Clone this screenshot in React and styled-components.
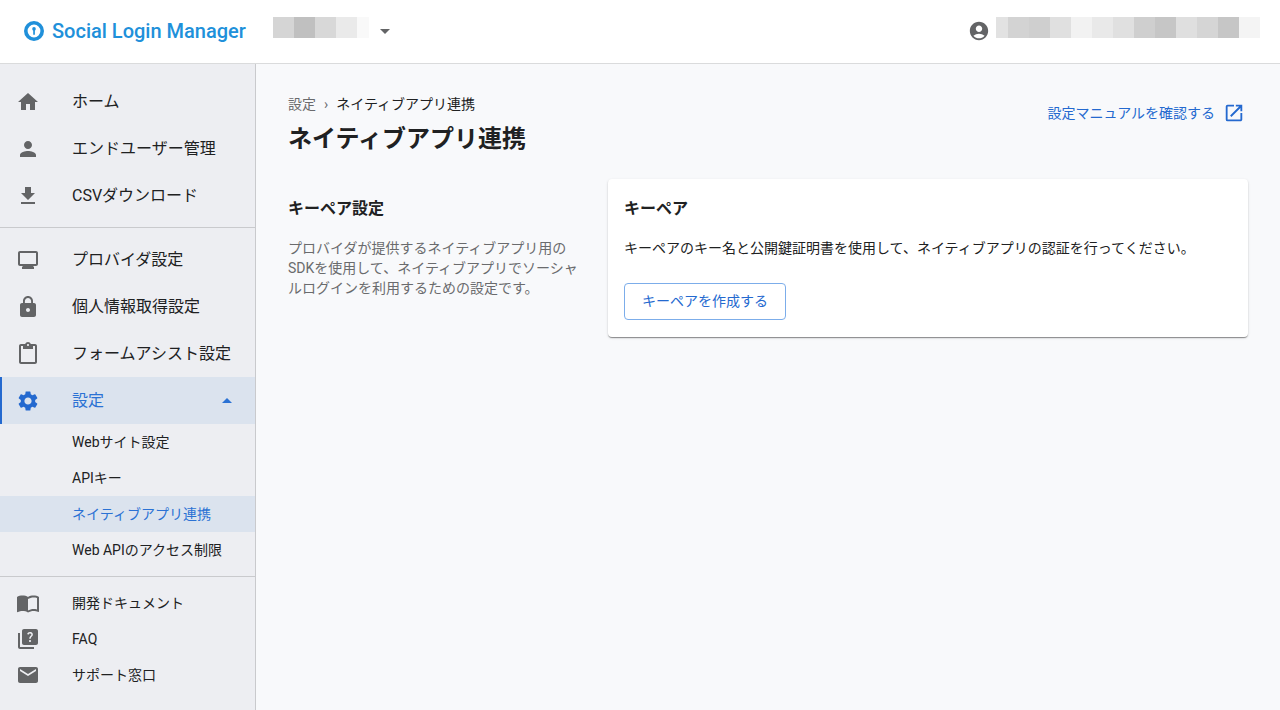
import React from "react";
import styled, { createGlobalStyle } from "styled-components";
import {
  MdAccountCircle,
  MdArrowDropDown,
  MdArrowDropUp,
  MdContentPaste,
  MdEmail,
  MdGetApp,
  MdHome,
  MdImportContacts,
  MdLock,
  MdMonitor,
  MdOpenInNew,
  MdPerson,
  MdQuiz,
  MdSettings,
} from "react-icons/md";

const GlobalStyle = createGlobalStyle`
* { box-sizing: border-box; }
body {
  margin: 0;
  font-family: Roboto, "Noto Sans CJK JP", sans-serif;
  font-size: 14px;
  line-height: 20px;
  color: #202122;
  background-color: #f8f9fb;
}
a { color: inherit; text-decoration: none; }
button { font: inherit; color: inherit; cursor: pointer; }
svg { display: block; flex-shrink: 0; }
`;

const Container = styled.div`
  display: flex;
  flex-direction: column;
  min-height: 100vh;
`;

const Header = styled.header`
  display: flex;
  align-items: center;
  height: 64px;
  padding: 0 20px 2px 24px;
  background-color: white;
  border-bottom: 1px solid #dadbdc;
`;
const Logo = styled.a`
  display: flex;
  align-items: center;
  gap: 8px;
  margin-right: 27px;
  color: #2090da;
  font-size: 20px;
  font-weight: 500;
`;
const SiteButton = styled.button`
  display: flex;
  align-items: center;
  gap: 4px;
  padding: 0;
  border: none;
  background: none;
  color: #636466;
`;
const Account = styled.div`
  display: flex;
  align-items: center;
  gap: 6px;
  margin-left: auto;
  color: #636466;
`;
const Mosaic = styled.span`
  display: flex;
  height: 28px;
`;
const Tile = styled.span`
  width: ${(props) => (props.$narrow ? "12px" : "21px")};
  height: 21px;
  background-color: ${(props) => props.$color};
`;

const Wrapper = styled.div`
  display: flex;
  flex: 1;
`;
const Sidebar = styled.nav`
  flex: 0 0 256px;
  padding: 14px 0 16px;
  background-color: #edeef2;
  border-right: 1px solid #c9cacd;
`;
const List = styled.ul`
  margin: 0;
  padding: 0;
  list-style: none;
`;
const Divider = styled.hr`
  height: 1px;
  margin: 8px 0;
  border: none;
  background-color: #c9cacd;
`;
const NavItem = styled.a`
  display: flex;
  align-items: center;
  width: 100%;
  height: ${(props) => (props.$small ? "36px" : "47px")};
  padding: 0 16px;
  border: none;
  background-color: ${(props) => (props.$active ? "#dbe3ee" : "transparent")};
  box-shadow: ${(props) => (props.$marked ? "inset 2px 0 #2469cf" : "none")};
  color: ${(props) => (props.$active ? "#2b72d4" : "inherit")};
  font-size: ${(props) => (props.$small ? "14px" : "16px")};
  text-align: left;
`;
const NavIcon = styled.span`
  flex: 0 0 56px;
  color: ${(props) => (props.$active ? "#2469cf" : "#636466")};
`;
const NavLabel = styled.span`
  flex: 1;
  white-space: nowrap;
`;

const Main = styled.main`
  flex: 1;
  min-width: 0;
  padding: 30px 32px;
`;
const Top = styled.div`
  display: flex;
  align-items: flex-start;
  justify-content: space-between;
`;
const Breadcrumb = styled.nav`
  display: flex;
  gap: 8px;
`;
const Muted = styled.span`
  color: #6a6b6d;
`;
const Title = styled.h1`
  margin: 9px 0 0;
  font-size: 24px;
  line-height: 32px;
  font-weight: 700;
`;
const ManualLink = styled.a`
  display: flex;
  align-items: center;
  gap: 8px;
  padding: 8px 3px;
  color: #2469cf;
`;

const Section = styled.section`
  display: grid;
  grid-template-columns: 1fr 2fr;
  align-items: start;
  margin-top: 24px;
`;
const Description = styled.div`
  padding: 18px 24px 16px 0;
`;
const Card = styled.div`
  padding: 18px 16px 17px;
  background-color: white;
  border-radius: 4px;
  box-shadow: 0 2px 1px -1px rgba(0, 0, 0, 0.2),
    0 1px 1px 0 rgba(0, 0, 0, 0.24), 0 1px 3px 0 rgba(0, 0, 0, 0.12);
`;
const SubTitle = styled.h2`
  margin: 0 0 17px;
  font-size: 16px;
  line-height: 24px;
  font-weight: 700;
`;
const Text = styled.p`
  margin: 0;
  color: ${(props) => (props.$muted ? "#6a6b6d" : "inherit")};
`;
const Button = styled.button`
  margin-top: 25px;
  padding: 7px 17px 8px;
  border: 1px solid #7cadea;
  border-radius: 4px;
  background-color: white;
  color: #2469cf;
  line-height: 20px;
`;

const siteTiles = ["#d5d5d5", "#c0c0c0", "#d8d8d8", "#eaeaea", "#f9f9f9"];
const userTiles = [
  "#e2e2e2", "#d3d3d3", "#cfcfcf", "#e0e0e0", "#f2f2f2", "#e9e9e9", "#e0e0e0",
  "#cfcfcf", "#c6c6c6", "#dfdfdf", "#d5d5d5", "#c6c6c6", "#f4f4f4",
];

const mainItems = [
  { label: "ホーム", icon: MdHome },
  { label: "エンドユーザー管理", icon: MdPerson },
  { label: "CSVダウンロード", icon: MdGetApp },
];
const settingItems = [
  { label: "プロバイダ設定", icon: MdMonitor },
  { label: "個人情報取得設定", icon: MdLock },
  { label: "フォームアシスト設定", icon: MdContentPaste },
];
const subItems = [
  { label: "Webサイト設定" },
  { label: "APIキー" },
  { label: "ネイティブアプリ連携", active: true },
  { label: "Web APIのアクセス制限" },
];
const helpItems = [
  { label: "開発ドキュメント", icon: MdImportContacts },
  { label: "FAQ", icon: MdQuiz },
  { label: "サポート窓口", icon: MdEmail },
];

const LogoMark = () => (
  <svg width="20" height="20" viewBox="0 0 20 20" aria-hidden="true">
    <circle cx="10" cy="10" r="8.2" fill="white" stroke="#2090da" strokeWidth="3.6" />
    <circle cx="10" cy="7.9" r="1.8" fill="#2090da" />
    <path d="M9.2 8h1.7v5.8H9.2z" fill="#2090da" />
  </svg>
);

const NavLinks = ({ items, small }) =>
  items.map(({ label, icon: Icon, active }) => (
    <li key={label}>
      <NavItem
        href="#"
        $small={small}
        $active={active}
        aria-current={active ? "page" : undefined}
      >
        <NavIcon>{Icon && <Icon size={24} />}</NavIcon>
        <NavLabel>{label}</NavLabel>
      </NavItem>
    </li>
  ));

const App = () => {
  return (
    <Container>
      <GlobalStyle />
      <Header>
        <Logo href="#">
          <LogoMark />
          Social Login Manager
        </Logo>
        <SiteButton type="button" aria-haspopup="listbox">
          <Mosaic>
            {siteTiles.map((color, i) => (
              <Tile key={i} $color={color} $narrow={i === 4} />
            ))}
          </Mosaic>
          <MdArrowDropDown size={24} />
        </SiteButton>
        <Account>
          <MdAccountCircle size={22} />
          <Mosaic>
            {userTiles.map((color, i) => (
              <Tile key={i} $color={color} $narrow={i === 0} />
            ))}
          </Mosaic>
        </Account>
      </Header>
      <Wrapper>
        <Sidebar>
          <List>
            <NavLinks items={mainItems} />
          </List>
          <Divider />
          <List>
            <NavLinks items={settingItems} />
            <li>
              <NavItem as="button" type="button" aria-expanded="true" $active $marked>
                <NavIcon $active>
                  <MdSettings size={24} />
                </NavIcon>
                <NavLabel>設定</NavLabel>
                <MdArrowDropUp size={24} />
              </NavItem>
              <List>
                <NavLinks items={subItems} small />
              </List>
            </li>
          </List>
          <Divider />
          <List>
            <NavLinks items={helpItems} small />
          </List>
        </Sidebar>
        <Main>
          <Top>
            <div>
              <Breadcrumb>
                <Muted as="a" href="#">設定</Muted>
                <Muted>›</Muted>
                <span>ネイティブアプリ連携</span>
              </Breadcrumb>
              <Title>ネイティブアプリ連携</Title>
            </div>
            <ManualLink href="#">
              設定マニュアルを確認する
              <MdOpenInNew size={22} />
            </ManualLink>
          </Top>
          <Section>
            <Description>
              <SubTitle>キーペア設定</SubTitle>
              <Text $muted>
                プロバイダが提供するネイティブアプリ用のSDKを使用して、ネイティブアプリでソーシャルログインを利用するための設定です。
              </Text>
            </Description>
            <Card>
              <SubTitle>キーペア</SubTitle>
              <Text>
                キーペアのキー名と公開鍵証明書を使用して、ネイティブアプリの認証を行ってください。
              </Text>
              <Button type="button">キーペアを作成する</Button>
            </Card>
          </Section>
        </Main>
      </Wrapper>
    </Container>
  );
};

export default App;
